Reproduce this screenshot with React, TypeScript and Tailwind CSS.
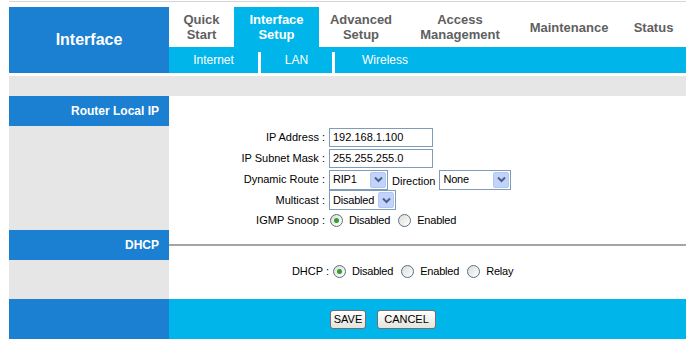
import React from 'react';

const BLUE = 'bg-[#1b7fd2]';

const tabs = [
    { label: ['Quick', 'Start'], w: 'w-[65px]' },
    { label: ['Interface', 'Setup'], w: 'w-[85px]', active: true },
    { label: ['Advanced', 'Setup'], w: 'w-[84px]' },
    { label: ['Access', 'Management'], w: 'w-[114px]' },
    { label: ['Maintenance'], w: 'w-[104px]' },
    { label: ['Status'], w: 'flex-1' },
];

function Chevron() {
    return (
        <svg width="9" height="7" viewBox="0 0 9 7">
            <path d="M1 1.5 L4.5 5 L8 1.5" fill="none" stroke="#4d6185" strokeWidth="2" />
        </svg>
    );
}

function Select({ value, width }: { value: string; width: string }) {
    return (
        <div className={`${width} h-[20px] border border-[#7f9db9] bg-white flex items-center justify-between pl-[3px] pr-[1px]`}>
            <span className="tracking-[-0.2px]">{value}</span>
            <span className="w-[16px] h-[16px] shrink-0 rounded-[2px] bg-[#c1d3fb] border border-[#b3c7f1] flex items-center justify-center">
                <Chevron />
            </span>
        </div>
    );
}

function Radio({ checked, label }: { checked?: boolean; label: string }) {
    return (
        <span className="inline-flex items-center mr-[8px]">
            <span className="w-[13px] h-[13px] rounded-full border border-[#5b6f86] bg-gradient-to-br from-[#dcdcd6] to-white flex items-center justify-center">
                {checked && <span className="w-[5px] h-[5px] rounded-full bg-[#2fa02f]" />}
            </span>
            <span className="ml-[6px] tracking-[-0.2px]">{label}</span>
        </span>
    );
}

function Row({ label, children, h = 'h-[21px]' }: { label: string; children: React.ReactNode; h?: string }) {
    return (
        <div className={`flex items-center ${h}`}>
            <div className="w-[160px] pr-[4px] text-right">{label}</div>
            <div className="flex items-center">{children}</div>
        </div>
    );
}

function Button({ children, width }: { children: React.ReactNode; width: string }) {
    return (
        <button className={`${width} h-[19px] rounded-[3px] border border-[#707070] bg-gradient-to-b from-white to-[#e4e4dc] text-[11px] text-black leading-none`}>
            {children}
        </button>
    );
}

export default function App() {
    return (
        <div className="w-[686px] h-[339px] bg-white overflow-hidden pl-[9px] font-['Liberation_Sans',Arial,sans-serif] text-[11px] text-black">
            {/* Top rule */}
            <div className="mt-[1px] h-px bg-[#d6d6d6]" />
            <div className="h-[5px]" />

            {/* Header */}
            <div className="flex h-[66px]">
                <div className={`w-[160px] ${BLUE} flex items-center justify-center text-white font-bold text-[16px]`}>
                    Interface
                </div>
                <div className="flex-1 flex flex-col">
                    <div className="h-[40px] flex">
                        {tabs.map((t) => (
                            <div
                                key={t.label.join(' ')}
                                className={`${t.w} flex flex-col items-center justify-center text-[13px] font-bold leading-[15px] ${t.active ? 'bg-[#00b5e9] text-white' : 'text-[#606060]'}`}
                            >
                                {t.label.map((l) => (
                                    <span key={l}>{l}</span>
                                ))}
                            </div>
                        ))}
                    </div>
                    <div className="h-[26px] bg-[#00b5e9] flex text-white text-[12px]">
                        <div className="w-[89px] flex items-center justify-center">Internet</div>
                        <div className="w-[3px] mt-[5px] bg-white" />
                        <div className="w-[71px] flex items-center justify-center">LAN</div>
                        <div className="w-[3px] mt-[5px] bg-white" />
                        <div className="w-[100px] flex items-center justify-center">Wireless</div>
                    </div>
                </div>
            </div>

            <div className="h-[3px]" />
            <div className="h-[20px] bg-[#e6e6e6]" />

            {/* Body */}
            <div className="grid grid-cols-[160px_1fr]">
                <div className={`h-[30px] ${BLUE} flex items-center justify-end pr-[10px] text-white font-bold text-[12px]`}>
                    Router Local IP
                </div>
                <div className="h-[30px]" />

                <div className="h-[104px] bg-[#e6e6e6]" />
                <div className="h-[104px] pt-[1px]">
                    <Row label="IP Address :">
                        <div className="w-[104px] h-[19px] border border-[#7f9db9] px-[3px] flex items-center">192.168.1.100</div>
                    </Row>
                    <Row label="IP Subnet Mask :">
                        <div className="w-[104px] h-[19px] border border-[#7f9db9] px-[3px] flex items-center">255.255.255.0</div>
                    </Row>
                    <Row label="Dynamic Route :">
                        <Select value="RIP1" width="w-[59px]" />
                        <span className="ml-[4px] mr-[4px] mt-[3px]">Direction</span>
                        <Select value="None" width="w-[72px]" />
                    </Row>
                    <Row label="Multicast :" h="h-[20px]">
                        <Select value="Disabled" width="w-[67px]" />
                    </Row>
                    <Row label="IGMP Snoop :" h="h-[20px]">
                        <span className="ml-[1px] flex items-center">
                            <Radio checked label="Disabled" />
                            <Radio label="Enabled" />
                        </span>
                    </Row>
                </div>

                <div className={`h-[30px] ${BLUE} flex items-center justify-end pr-[10px] text-white font-bold text-[12px]`}>
                    DHCP
                </div>
                <div className="h-[30px] flex items-center">
                    <div className="w-full h-[2px] bg-[#a6a6a1]" />
                </div>

                <div className="h-[39px] bg-[#e6e6e6]" />
                <div className="h-[39px]">
                    <div className="h-[22px] flex items-center">
                        <div className="w-[164px] pr-[4px] text-right">DHCP :</div>
                        <Radio checked label="Disabled" />
                        <Radio label="Enabled" />
                        <Radio label="Relay" />
                    </div>
                </div>

                <div className={`h-[40px] ${BLUE}`} />
                <div className="h-[40px] bg-[#00b5e9] flex items-center pl-[161px] gap-[11px]">
                    <Button width="w-[36px]">SAVE</Button>
                    <Button width="w-[59px]">CANCEL</Button>
                </div>
            </div>
        </div>
    );
}
